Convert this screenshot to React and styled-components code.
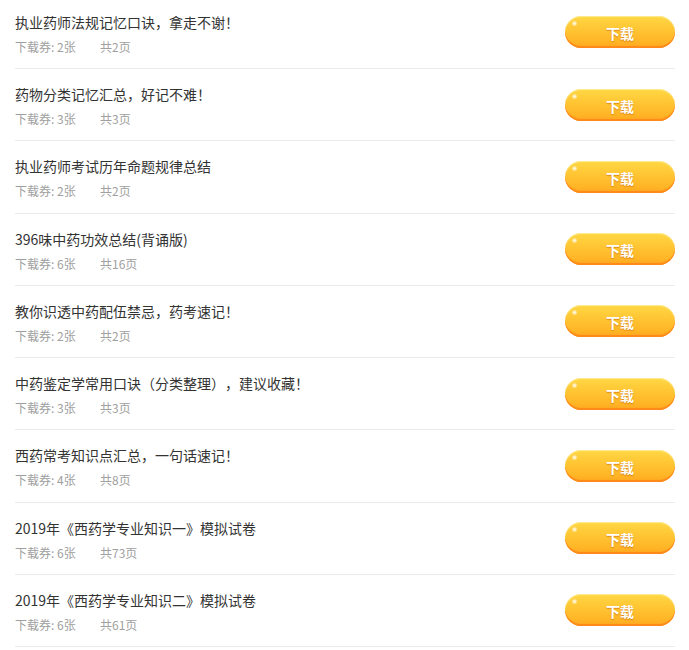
import React from "react";
import styled, { createGlobalStyle } from "styled-components";

const Global = createGlobalStyle`
  html, body { margin: 0; padding: 0; background: #fff; }
  body {
    font-family: "Microsoft YaHei", "Noto Sans CJK SC", sans-serif;
    text-spacing-trim: space-all;
  }
`;

const Page = styled.div`
  width: 689px;
  height: 650px;
  overflow: hidden;
  padding: 0 14px 0 15px;
  box-sizing: border-box;
`;

const List = styled.ul`
  list-style: none;
  margin: -3.25px 0 0;
  padding: 0;
`;

const Row = styled.li`
  height: 72.25px;
  box-sizing: border-box;
  border-bottom: 1px solid #ebebeb;
  display: flex;
  align-items: flex-start;
  justify-content: space-between;
`;

const Info = styled.div`
  padding-top: 16px;
  display: flex;
  flex-direction: column;
`;

const Title = styled.div`
  font-size: 14px;
  line-height: 18px;
  color: #333;
  text-spacing-trim: space-all;
`;

const Meta = styled.div`
  margin-top: 7px;
  font-size: 12px;
  line-height: 18px;
  color: #a0a0a0;
  display: flex;
`;

const Tickets = styled.span`
  width: 85px;
`;

const Button = styled.button`
  margin-top: 19.5px;
  width: 110px;
  height: 32px;
  border: none;
  border-radius: 16px;
  position: relative;
  cursor: pointer;
  font-family: "Microsoft YaHei", "Noto Sans CJK SC", sans-serif;
  font-size: 14px;
  font-weight: bold;
  color: #fff;
  text-shadow: 0 1px 1px rgba(190, 90, 0, 0.55);
  background: linear-gradient(to bottom, #ffd845 0%, #ffc836 35%, #ffb526 80%, #ffac22 92%, #ff7e12 100%);
  box-shadow: inset 0 -2px 0 #ff8a1a, inset 0 1px 1px rgba(255, 240, 170, 0.8);
  padding: 0;
  padding-top: 2px;
  &::before {
    content: "";
    position: absolute;
    left: 7px;
    top: 5px;
    width: 5px;
    height: 5px;
    border-radius: 50%;
    background: radial-gradient(circle, rgba(255,255,255,0.95) 0%, rgba(255,255,255,0.4) 60%, rgba(255,255,255,0) 100%);
  }
`;

const items = [
  ["执业药师法规记忆口诀，拿走不谢！", 2, 2],
  ["药物分类记忆汇总，好记不难！", 3, 3],
  ["执业药师考试历年命题规律总结", 2, 2],
  ["396味中药功效总结(背诵版)", 6, 16],
  ["教你识透中药配伍禁忌，药考速记！", 2, 2],
  ["中药鉴定学常用口诀（分类整理），建议收藏！", 3, 3],
  ["西药常考知识点汇总，一句话速记！", 4, 8],
  ["2019年《西药学专业知识一》模拟试卷", 6, 73],
  ["2019年《西药学专业知识二》模拟试卷", 6, 61],
];

export default function App() {
  return (
    <Page>
      <Global />
      <List>
        {items.map(([t, n, p], i) => (
          <Row key={i}>
            <Info>
              <Title>{t}</Title>
              <Meta>
                <Tickets>下载券: {n}张</Tickets>
                <span>共{p}页</span>
              </Meta>
            </Info>
            <Button>下载</Button>
          </Row>
        ))}
      </List>
    </Page>
  );
}
